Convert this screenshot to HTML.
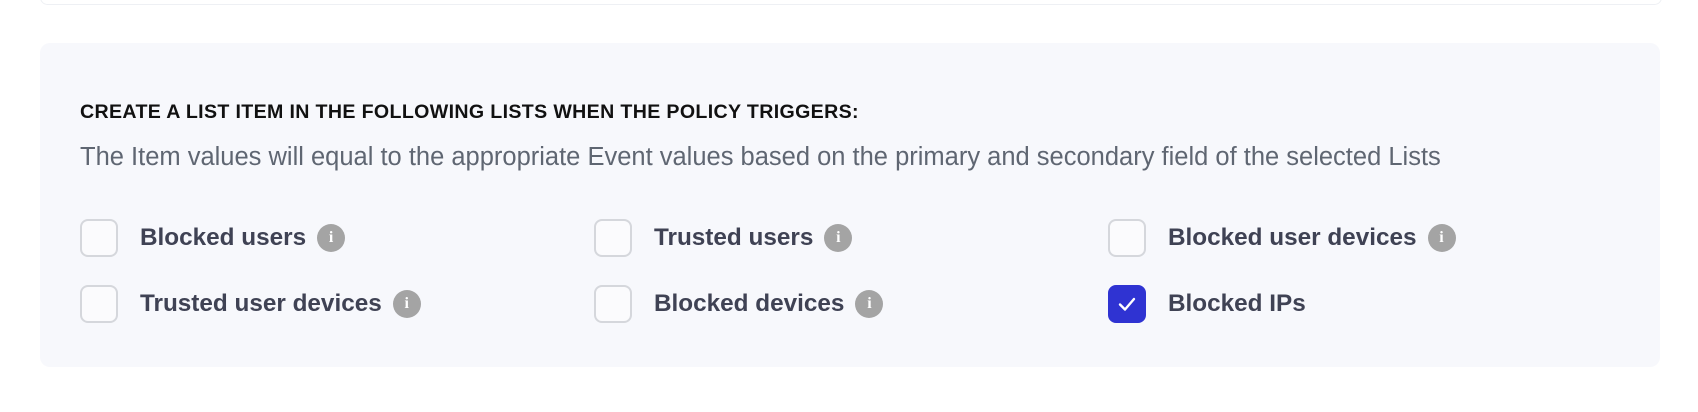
<!DOCTYPE html>
<html><head><style>
body{margin:0;width:1698px;height:412px;background:#fff;font-family:"Liberation Sans",sans-serif;position:relative;overflow:hidden}
.top{position:absolute;left:40px;width:1620px;top:-10px;height:13px;border:1px solid #eef0f4;border-radius:8px;background:#fff}
.panel{position:absolute;left:40px;top:43px;width:1620px;height:324px;background:#f7f8fc;border-radius:10px}
h3{position:absolute;left:80px;top:101px;margin:0;font-size:19.6px;font-weight:bold;color:#111;letter-spacing:0.35px}
.desc{position:absolute;left:80px;top:143px;font-size:25.5px;color:#5f6672}
.item{position:absolute;display:flex;align-items:center;height:40px}
.cb{width:38px;height:38px;border:2px solid #d5d7dc;border-radius:8px;box-sizing:border-box;background:#fbfbfd;margin-right:22px}
.cb.on{background:#2f33d2;border-color:#2f33d2;display:flex;align-items:center;justify-content:center}
.lbl{font-size:24.3px;font-weight:bold;color:#3f4254}
.i{width:28px;height:28px;border-radius:50%;background:#a4a4a4;color:#fff;font-size:16px;font-weight:bold;font-family:"Liberation Serif",serif;display:inline-flex;align-items:center;justify-content:center;margin-left:11px}
</style></head><body>
<div class="top"></div>
<div class="panel"></div>
<h3>CREATE A LIST ITEM IN THE FOLLOWING LISTS WHEN THE POLICY TRIGGERS:</h3>
<div class="desc">The Item values will equal to the appropriate Event values based on the primary and secondary field of the selected Lists</div>
<div class="item" style="left:80px;top:218px"><div class="cb"></div><span class="lbl">Blocked users</span><span class="i">i</span></div>
<div class="item" style="left:594px;top:218px"><div class="cb"></div><span class="lbl">Trusted users</span><span class="i">i</span></div>
<div class="item" style="left:1108px;top:218px"><div class="cb"></div><span class="lbl">Blocked user devices</span><span class="i">i</span></div>
<div class="item" style="left:80px;top:284px"><div class="cb"></div><span class="lbl">Trusted user devices</span><span class="i">i</span></div>
<div class="item" style="left:594px;top:284px"><div class="cb"></div><span class="lbl">Blocked devices</span><span class="i">i</span></div>
<div class="item" style="left:1108px;top:284px"><div class="cb on"><svg width="20" height="16" viewBox="0 0 20 16"><path d="M3 8.5l5 5L17 3" fill="none" stroke="#fff" stroke-width="2.4" stroke-linecap="round" stroke-linejoin="round"/></svg></div><span class="lbl">Blocked IPs</span></div>
</body></html>
